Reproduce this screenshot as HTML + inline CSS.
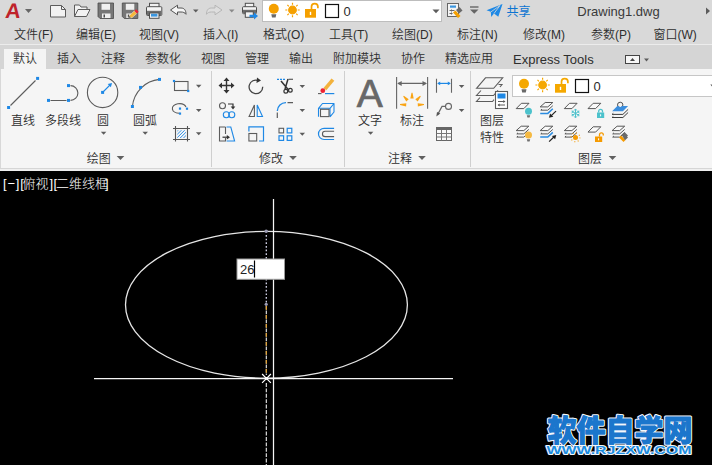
<!DOCTYPE html>
<html><head><meta charset="utf-8"><title>Drawing1.dwg</title>
<style>
*{margin:0;padding:0;box-sizing:border-box}
html,body{width:712px;height:465px;overflow:hidden;background:#000}
body{position:relative;font-family:"Liberation Sans","Noto Sans CJK SC",sans-serif;font-size:12px;color:#333}
.abs{position:absolute}
#title{left:0;top:0;width:712px;height:24px;background:#d9d9d9}
#menu{left:0;top:24px;width:712px;height:20px;background:#d9d9d9}
#tabs{left:0;top:44px;width:712px;height:25px;background:#d5d5d5;border-top:1px solid #ececec}
#panel{left:0;top:69px;width:712px;height:99px;background:#f5f5f5;border-left:1px solid #d8d8d8}
#strip{left:0;top:168px;width:712px;height:3px;background:#efefef;border-top:1.5px solid #d6d6d6}
#view{left:0;top:171px;width:712px;height:294px;background:#000}
.t{position:absolute;white-space:nowrap;line-height:14px;height:14px}
.m{top:28px;font-size:12px;color:#2e2e2e;font-weight:350}
.tb{top:52px;font-size:12px;color:#2e2e2e;font-weight:350}
.lb{font-size:12px;color:#2e2e2e;font-weight:350}
.vl{top:177px;font-size:13px;color:#fff;font-weight:300}
</style></head><body>
<div id="title" class="abs"></div>
<div id="menu" class="abs"></div>
<div id="tabs" class="abs"></div>
<div id="panel" class="abs"></div>
<div id="strip" class="abs"></div>
<div id="view" class="abs"></div>

<!-- menu -->
<span class="t m" style="left:14px">文件(F)</span>
<span class="t m" style="left:76px">编辑(E)</span>
<span class="t m" style="left:139px">视图(V)</span>
<span class="t m" style="left:203px">插入(I)</span>
<span class="t m" style="left:263px">格式(O)</span>
<span class="t m" style="left:329px">工具(T)</span>
<span class="t m" style="left:392px">绘图(D)</span>
<span class="t m" style="left:457px">标注(N)</span>
<span class="t m" style="left:523px">修改(M)</span>
<span class="t m" style="left:591px">参数(P)</span>
<span class="t m" style="left:653.500px">窗口(W)</span>

<!-- tabs -->
<div class="abs" style="left:4px;top:49px;width:42px;height:21px;background:#f4f4f4"></div>
<span class="t tb" style="left:13px">默认</span>
<span class="t tb" style="left:57px">插入</span>
<span class="t tb" style="left:101px">注释</span>
<span class="t tb" style="left:145px">参数化</span>
<span class="t tb" style="left:201px">视图</span>
<span class="t tb" style="left:245px">管理</span>
<span class="t tb" style="left:289px">输出</span>
<span class="t tb" style="left:333px">附加模块</span>
<span class="t tb" style="left:401px">协作</span>
<span class="t tb" style="left:445px">精选应用</span>
<span class="t tb" style="left:513px;top:53px;font-size:13px">Express Tools</span>

<!-- panel labels -->
<span class="t lb" style="left:11px;top:114px">直线</span>
<span class="t lb" style="left:45px;top:114px">多段线</span>
<span class="t lb" style="left:97px;top:114px">圆</span>
<span class="t lb" style="left:133px;top:114px">圆弧</span>
<span class="t lb" style="left:86.800px;top:152px">绘图</span>
<span class="t lb" style="left:259px;top:152px">修改</span>
<span class="t lb" style="left:358px;top:114px">文字</span>
<span class="t lb" style="left:400px;top:114px">标注</span>
<span class="t lb" style="left:388px;top:152px">注释</span>
<span class="t lb" style="left:480px;top:114px">图层</span>
<span class="t lb" style="left:480px;top:131px">特性</span>
<span class="t lb" style="left:578px;top:152px">图层</span>


<!-- ICONS-TOP -->
<svg class="abs" style="left:0;top:0" width="712" height="171" viewBox="0 0 712 171" fill="none" font-family="Liberation Sans, Noto Sans CJK SC, sans-serif">
<!-- logo -->
<text x="6.800" y="18.300" font-size="21.200" font-weight="bold" fill="#bf232b" transform="skewX(-6)">A</text>
<path d="M25 9h7l-3.500 4z" fill="#666"/>
<!-- new -->
<path d="M50.500 5.500h11l4 4v7.500h-15z" fill="#f2f2f2" stroke="#5c5c5c"/>
<path d="M61.500 5.500v4h4" stroke="#5c5c5c"/>
<!-- open -->
<path d="M74.500 16.500v-11.500h5l1.500 2h6v2.500" stroke="#5c5c5c" fill="#f2f2f2"/>
<path d="M74.500 16.500l3.500-7h12l-3.500 7z" fill="#f2f2f2" stroke="#5c5c5c"/>
<!-- save -->
<path d="M98 3h15.500v15.500h-13.500l-2-2z" fill="#777" stroke="#4a4a4a" stroke-width="0.800"/>
<rect x="101.500" y="3.800" width="8.500" height="6" fill="#f0f0f0"/>
<rect x="102" y="13.500" width="8.500" height="4.500" fill="#f0f0f0"/>
<rect x="103.500" y="14.500" width="1.500" height="3" fill="#4a4a4a"/>
<!-- save as -->
<path d="M122.300 3h15.500v15.500h-13.500l-2-2z" fill="#777" stroke="#4a4a4a" stroke-width="0.800"/>
<rect x="125.800" y="3.800" width="8.500" height="6" fill="#f0f0f0"/>
<rect x="126.300" y="13.500" width="5" height="4.500" fill="#f0f0f0"/>
<rect x="127.800" y="14.500" width="1.500" height="3" fill="#4a4a4a"/>
<path d="M128.800 17.800l0.800-2.600l4.800-4.400l2.400 2.600l-4.800 4.400z" fill="#f5b83c" stroke="#e6e6e6" stroke-width="0.500"/>
<path d="M134.400 10.800l1.800-1.600l2.400 2.600l-1.800 1.600z" fill="#ee2233"/>
<path d="M128.600 18l0.700-2.300l1.700 1.700z" fill="#666"/>
<!-- print -->
<rect x="149.500" y="3.300" width="9.500" height="5" fill="#f0f0f0" stroke="#4f4f4f"/>
<rect x="146.500" y="6.700" width="15.300" height="8.800" rx="1" fill="#f4f4f4" stroke="#4f4f4f"/>
<rect x="147" y="10.800" width="14.300" height="4.300" fill="#6e6e6e"/>
<rect x="149.500" y="13" width="9.500" height="5.300" fill="#f4f4f4" stroke="#4f4f4f"/>
<rect x="151" y="13.800" width="6.400" height="2.800" fill="#3a96e0"/>
<!-- undo -->
<path d="M170.500 10L177.500 5.200V8H181C184.500 8 186 10.500 186 14.300C184.800 12.600 183.300 12 181 12H177.500V14.800Z" fill="#f6f6f6" stroke="#555" stroke-linejoin="round"/>
<path d="M193 9.500h5.500l-2.750 3z" fill="#5c5c5c"/>
<!-- redo -->
<path d="M222 10L215 5.200V8H211.500C208 8 206.500 10.500 206.500 14.300C207.700 12.600 209.200 12 211.500 12H215V14.800Z" fill="#dedede" stroke="#b6b6b6" stroke-linejoin="round"/>
<path d="M229 9.500h5.500l-2.750 3z" fill="#8a8a8a"/>
<!-- plot -->
<rect x="245.300" y="3.300" width="8.400" height="4.500" fill="#f4f4f4" stroke="#4f4f4f"/>
<rect x="242.500" y="6.700" width="14" height="7" rx="1" fill="#f4f4f4" stroke="#4f4f4f"/>
<rect x="243" y="9.800" width="13" height="3.400" fill="#6e6e6e"/>
<rect x="245.300" y="11.800" width="8" height="5.500" fill="#f4f4f4" stroke="#4f4f4f"/>
<path d="M249.500 14.800h4.500v-2.200l4 3.400l-4 3.400v-2.200h-4.500z" fill="#1e88e5"/>
<!-- layer combo -->
<rect x="262.500" y="0.500" width="179" height="21" fill="#fff" stroke="#bdbdbd"/>
<circle cx="273.800" cy="8.800" r="5" fill="#f5a000"/>
<path d="M271.300 14.300h5l-0.700 3.200h-3.600z" fill="#6a6a6a"/>
<g stroke="#f5a000" stroke-width="1.200">
<circle cx="292.500" cy="10" r="3.800" fill="#f5a000"/>
<path d="M292.500 2.800v2M292.500 15.200v2M285.300 10h2M297.700 10h2M287.400 4.900l1.400 1.400M296.200 13.700l1.400 1.400M287.400 15.100l1.400-1.400M296.200 6.300l1.400-1.400"/>
</g>
<rect x="305" y="9" width="11" height="8.700" fill="#f5a000"/>
<rect x="309.800" y="11.800" width="1.400" height="3.200" fill="#fff"/>
<path d="M311.500 9v-2.200a3.200 3.200 0 0 1 6.400 0v1.400" stroke="#f5a000" stroke-width="1.700"/>
<rect x="325.500" y="4.500" width="13" height="13" fill="#fff" stroke="#111" stroke-width="1.200"/>
<text x="343.500" y="15.500" font-size="13" fill="#2b2b2b">0</text>
<path d="M432.500 9.500h7l-3.500 3.800z" fill="#5c5c5c"/>
<!-- match prop -->
<rect x="447.500" y="3.500" width="11" height="13" fill="#f4f4f4" stroke="#666"/>
<rect x="450" y="5.500" width="6" height="2.200" fill="#3a96e0"/>
<path d="M449.500 10.500h5M449.500 13.500h3" stroke="#666"/>
<path d="M451.500 9.500v2M451.500 12.500v2" stroke="#666"/>
<path d="M453 12.500l2.500-2l5 5.500l-2.500 2z" fill="#f5a000"/>
<path d="M456 10l3.500-3l3 3.500l-3.500 3z" fill="#6a6a6a"/>
<!-- customize -->
<rect x="470" y="6.300" width="8.500" height="1.400" fill="#666"/>
<path d="M470 9.500h8.500l-4.250 4.200z" fill="#666"/>
<!-- plane -->
<path d="M486.500 10.200l16-6.200l-4.200 12.800l-4.300-3.300l-2.800 3.500l-0.400-5.200z" fill="#1e88e5"/>
<path d="M491 11.800l9-6.300l-6 8" stroke="#d9d9d9" stroke-width="0.800"/>
<text x="506.500" y="15.500" font-size="12" fill="#0b74d1">共享</text>
<text x="577.300" y="15.500" font-size="13" fill="#3a3a3a">Drawing1.dwg</text>
<path d="M706 7.500l4 3.500l-4 3.500z" fill="#5c5c5c"/>
<!-- tab row extras -->
<rect x="625.500" y="55.500" width="14" height="8" fill="#f6f6f6" stroke="#444"/>
<path d="M630 61h5l-2.500-3z" fill="#444"/>
<path d="M644 58.500h5l-2.500 3z" fill="#5c5c5c"/>
<!-- RIBBON-ICONS -->
<path d="M211.5 71v96" stroke="#cfcfcf"/>
<path d="M344.5 71v96" stroke="#cfcfcf"/>
<path d="M470.5 71v96" stroke="#cfcfcf"/>
<path d="M10.500 105.500L35.500 80.500" stroke="#5c5c5c" stroke-width="1.100"/><rect x="36.10" y="76.90" width="3" height="3" fill="#1e88e5"/><rect x="7.10" y="106.00" width="3" height="3" fill="#1e88e5"/>
<path d="M50.500 100.500h16M70.500 85.600a7.400 7.400 0 0 1 0 14.800" stroke="#5c5c5c" stroke-width="1.100"/><rect x="47.00" y="98.90" width="3" height="3" fill="#1e88e5"/><rect x="67.00" y="98.90" width="3" height="3" fill="#1e88e5"/><rect x="67.00" y="84.10" width="3" height="3" fill="#1e88e5"/>
<circle cx="102.600" cy="92.400" r="15.200" stroke="#5c5c5c" stroke-width="1.100"/><rect x="101.10" y="90.90" width="3" height="3" fill="#1e88e5"/><path d="M103.500 91.500l6.500-6.500" stroke="#1e88e5" stroke-width="1.100"/><path d="M112 83l-1.100 4.300l-3.200-3.200z" fill="#1e88e5"/>
<path d="M100.85 131.70h5.5l-2.75 3z" fill="#5c5c5c"/><path d="M142.45 131.70h5.5l-2.75 3z" fill="#5c5c5c"/>
<path d="M132.400 106.500A30 30 0 0 1 159.500 79.400" stroke="#5c5c5c" stroke-width="1.100"/><rect x="158.00" y="77.90" width="3" height="3" fill="#1e88e5"/><rect x="139.00" y="85.90" width="3" height="3" fill="#1e88e5"/><rect x="130.90" y="105.00" width="3" height="3" fill="#1e88e5"/>
<rect x="174.500" y="81.500" width="13.500" height="9" stroke="#5c5c5c" stroke-width="1.100"/><rect x="172.90" y="79.90" width="2.2" height="2.2" fill="#1e88e5"/><rect x="187.10" y="89.90" width="2.2" height="2.2" fill="#1e88e5"/><path d="M195.95 84.70h5.5l-2.75 3z" fill="#5c5c5c"/>
<path d="M186 107a7 4.800 0 1 0 -6.500 6.300" stroke="#5c5c5c" stroke-width="1.100"/><rect x="178.90" y="107.50" width="2.2" height="2.2" fill="#1e88e5"/><rect x="185.90" y="107.60" width="2.2" height="2.2" fill="#1e88e5"/><rect x="178.90" y="112.50" width="2.2" height="2.2" fill="#1e88e5"/><path d="M195.95 109.00h5.5l-2.75 3z" fill="#5c5c5c"/>
<defs><clipPath id="hc"><rect x="177.300" y="130.300" width="8.600" height="7.600"/></clipPath></defs><g clip-path="url(#hc)" stroke="#2a8fe8" stroke-width="1"><path d="M164.5 140.500l13-13"/><path d="M167.8 140.500l13-13"/><path d="M171.1 140.500l13-13"/><path d="M174.4 140.500l13-13"/><path d="M177.7 140.500l13-13"/><path d="M181.0 140.500l13-13"/><path d="M184.3 140.500l13-13"/><path d="M187.6 140.500l13-13"/><path d="M190.9 140.500l13-13"/><path d="M194.2 140.500l13-13"/></g>
<path d="M175.500 126v15.500M187.500 126v15.500M173 128.500h17M173 139.500h17" stroke="#555" stroke-width="1.100"/><path d="M195.95 132.30h5.5l-2.75 3z" fill="#5c5c5c"/>
<path d="M226.500 79.500v12M220.500 85.500h12" stroke="#333" stroke-width="1.400"/><path d="M226.500 77.500l3 3.500h-6zM226.500 93.500l3-3.500h-6zM218.500 85.500l3.500-3v6zM234.500 85.500l-3.500-3v6z" fill="#333"/>
<path d="M258.500 80.600A6.800 6.800 0 1 0 262.700 86.800" stroke="#444" stroke-width="1.300"/><path d="M257 77.500l4 3l-4.500 2.500z" fill="#333"/>
<path d="M277 79.300h8.500" stroke="#1e88e5" stroke-width="1.300" stroke-dasharray="2 1"/><path d="M288.500 79.300h4.500" stroke="#5c5c5c" stroke-width="1.200"/><path d="M281 81l8 9.500M288 79l-3 10" stroke="#333" stroke-width="1.500"/><circle cx="285.800" cy="91.300" r="1.900" stroke="#333" stroke-width="1.200"/><circle cx="290.300" cy="90.300" r="1.900" stroke="#333" stroke-width="1.200"/><path d="M299.55 84.90h5.5l-2.75 3z" fill="#5c5c5c"/>
<circle cx="222.500" cy="105.700" r="3" stroke="#5c5c5c" stroke-width="1.100"/><path d="M228 104h5v3" stroke="#333" stroke-width="1.200"/><path d="M233 109.500l-2.300-3h4.600z" fill="#333"/><circle cx="226.300" cy="114.700" r="3" stroke="#1e88e5" stroke-width="1.100"/><circle cx="231.800" cy="114.700" r="3" stroke="#1e88e5" stroke-width="1.100"/>
<path d="M254.400 105v11.500h-5.300z" stroke="#5c5c5c" stroke-width="1.100"/><path d="M257.200 105v11.500h5.300z" stroke="#1e88e5" stroke-width="1.100"/>
<path d="M277.300 111A8.500 8.500 0 0 1 286 102.600" stroke="#1e88e5" stroke-width="1.300"/><path d="M287.500 102.600h5.500M277.300 112.500v5.500" stroke="#5c5c5c" stroke-width="1.200"/><path d="M299.55 109.10h5.5l-2.75 3z" fill="#5c5c5c"/>
<path d="M225.500 127h-6v14h6v-3M225.500 127v7" stroke="#5c5c5c" stroke-width="1.100"/><path d="M222.500 137.200h5" stroke="#333" stroke-width="1.200"/><path d="M230 137.200l-3.200-2.300v4.600z" fill="#333"/><path d="M226.500 127h4.300l3.800 14h-8" stroke="#1e88e5" stroke-width="1.100"/>
<path d="M248.900 131.500v-4.600h14.600v14.100h-4.500" stroke="#1e88e5" stroke-width="1.200"/><rect x="248.900" y="133.500" width="7.800" height="7.500" stroke="#5c5c5c" stroke-width="1.100"/>
<rect x="279" y="128.300" width="4.600" height="4.600" stroke="#5c5c5c" stroke-width="1.100"/><rect x="287.200" y="128.300" width="4.600" height="4.600" stroke="#1e88e5" stroke-width="1.200"/><rect x="279" y="135.800" width="4.600" height="4.600" stroke="#1e88e5" stroke-width="1.200"/><rect x="287.200" y="135.800" width="4.600" height="4.600" stroke="#1e88e5" stroke-width="1.200"/><path d="M299.55 132.80h5.5l-2.75 3z" fill="#5c5c5c"/>
<path d="M331.500 78.500l2.800 2.300l-8 9.500l-2.800-2.300z" fill="#f3b23c"/><circle cx="322.800" cy="90.700" r="2.400" fill="#ee2233"/><path d="M318 93.600h3.500" stroke="#5c5c5c" stroke-width="1.100"/><path d="M325 93.600h9.300" stroke="#1e88e5" stroke-width="1.200"/>
<path d="M318.500 116.800v-8.500l4-4.800h11.500v8.500l-4 4.800M318.500 108.300h11.500l4-4.800M330 108.300v8.500" stroke="#1e88e5" stroke-width="1.100" stroke-linejoin="round"/><rect x="320.500" y="109.300" width="8.500" height="7.300" stroke="#5c5c5c" stroke-width="1.100"/>
<path d="M334.100 128.300h-10a5.600 5.600 0 0 0 0 11.200h10" stroke="#1e88e5" stroke-width="1.200"/><path d="M334.100 131.300h-9a2.650 2.650 0 0 0 0 5.300h9" stroke="#5c5c5c" stroke-width="1.100"/>
<text x="356.800" y="107.200" font-size="39" fill="#686868" stroke="#686868" stroke-width="0.700">A</text><path d="M367.85 131.70h5.5l-2.75 3z" fill="#5c5c5c"/>
<path d="M396.600 77v31.700M427.600 77v31.700M398 83.400h28" stroke="#666" stroke-width="1.100"/><path d="M397.200 83.400l4.500-2.500v5zM427 83.400l-4.500-2.500v5z" fill="#666"/>
<path d="M411.5 92.8L412.5 92.8L413.7 98.6L410.3 98.6zM420.1 95.8L420.8 96.5L417.7 101.5L415.3 99.2zM403.2 96.5L403.9 95.8L408.7 99.2L406.3 101.5zM424.0 104.1L424.0 105.1L417.9 106.6L417.7 103.2zM400.0 105.1L400.0 104.1L406.3 103.2L406.1 106.6z" fill="#f9a414"/>
<path d="M436.500 78.800v14M451.500 78.800v14" stroke="#666" stroke-width="1.100"/><path d="M438 83.400h12" stroke="#1e88e5" stroke-width="1.200"/><path d="M437.200 83.400l3-1.800v3.600zM450.800 83.400l-3-1.800v3.600z" fill="#1e88e5"/><path d="M458.85 84.90h5.5l-2.75 3z" fill="#5c5c5c"/>
<circle cx="448.500" cy="106.400" r="3" stroke="#666" stroke-width="1.100"/><path d="M445.500 106.400h-3.500l-4.500 8.500" stroke="#666" stroke-width="1.200"/><path d="M436.300 116.500l0.700-4.600l3.300 1.700z" fill="#555"/><path d="M458.85 109.10h5.5l-2.75 3z" fill="#5c5c5c"/>
<rect x="436.500" y="127.500" width="15" height="13" fill="#fafafa" stroke="#666" stroke-width="1"/><rect x="436" y="127" width="16" height="3" fill="#666"/><path d="M436.500 133.500h15M436.500 137h15M441.500 130v10.500M446.500 130v10.500" stroke="#777" stroke-width="1"/>
<path d="M116.70 156h7.600l-3.800 4z" fill="#606060"/>
<path d="M289.20 156h7.600l-3.800 4z" fill="#606060"/>
<path d="M418.20 156h7.600l-3.800 4z" fill="#606060"/>
<path d="M608.70 156h7.600l-3.800 4z" fill="#606060"/>
<path d="M476.500 88.300l9-10.500h17.200l-9 10.500z" stroke="#5c5c5c" stroke-width="1.100" fill="#f4f4f4"/>
<path d="M481 90.500l-4.500 5h17l4.500-5.200M498.500 84.500h3.500l-2 2.500M480 97.500l-3.500 4h16l1.500-1.800" stroke="#5c5c5c" stroke-width="1.100"/>
<rect x="495.500" y="91.500" width="12" height="17" fill="#fff" stroke="#5c5c5c" stroke-width="1.100"/><rect x="497.500" y="93.500" width="8" height="5" fill="#1e88e5"/>
<path d="M498 101.500h7M498 105h7" stroke="#5c5c5c" stroke-width="1"/><path d="M505.500 101.500l-2.200-1.500v3zM497.500 105l2.200-1.500v3z" fill="#5c5c5c"/>
<rect x="512.500" y="75.500" width="205" height="21" fill="#fff" stroke="#c6c6c6"/>
<circle cx="524" cy="83.800" r="5" fill="#f5a800"/><path d="M521.500 89.300h5l-0.700 3.200h-3.600z" fill="#6a6a6a"/>
<g stroke="#f5a800" stroke-width="1.200"><circle cx="542.600" cy="85" r="3.800" fill="#f5a800"/><path d="M542.600 77.800v2M542.600 90.200v2M535.400 85h2M547.800 85h2M537.500 79.900l1.400 1.400M546.300 88.700l1.400 1.400M537.500 90.100l1.400-1.400M546.300 81.300l1.400-1.400"/></g>
<rect x="555" y="84" width="11" height="8.700" fill="#f5a800"/><rect x="559.800" y="86.800" width="1.400" height="3.200" fill="#fff"/><path d="M561.500 84v-2.200a3.200 3.200 0 0 1 6.400 0v1.400" stroke="#f5a800" stroke-width="1.700"/>
<rect x="575.500" y="79.500" width="13" height="13" fill="#fff" stroke="#111" stroke-width="1.200"/><text x="593.500" y="90.500" font-size="13" fill="#2b2b2b">0</text>
<path d="M710.300 84.500h5l-2.500 3z" fill="#5c5c5c"/>
<!-- SMALL-LAYER-START -->
<path d="M516.2 108.6l5.2 -5.3h7.6l-5.2 5.3z" stroke="#4f4f4f" stroke-width="0.95" fill="#f9f9f9"/><circle cx="528.5" cy="111.2" r="3.500" fill="#4cc2cc"/><path d="M526.8 115.3h3.400l-0.600 2.300h-2.200z" fill="#707070"/>
<path d="M540.2 106.9l5.0 -4.4h7.6l-5.0 4.4z" stroke="#4f4f4f" stroke-width="0.95" fill="#f9f9f9"/><path d="M542.0 109.1l-1.2 1.100h7l5-4.500" stroke="#4f4f4f" stroke-width="0.95"/><path d="M540.2 113.4h7.600l5-4.700" stroke="#2a8be0" stroke-width="1.500"/><path d="M556 111.100l-5 4.800" stroke="#222" stroke-width="1.200"/><path d="M548.900 117.800l1.200-4.300l3.200 3.300z" fill="#222"/>
<path d="M564.3 108.6l5.2 -5.3h7.6l-5.2 5.3z" stroke="#4f4f4f" stroke-width="0.95" fill="#f9f9f9"/>
<path d="M575.5 113.4l3.90 2.25M577.92 114.80l1.45 -0.68M577.92 114.80l0.14 1.59M575.5 113.4l0.00 4.50M575.50 116.20l1.31 0.92M575.50 116.20l-1.31 0.92M575.5 113.4l-3.90 2.25M573.08 114.80l-0.14 1.59M573.08 114.80l-1.45 -0.68M575.5 113.4l-3.90 -2.25M573.08 112.00l-1.45 0.68M573.08 112.00l-0.14 -1.59M575.5 113.4l-0.00 -4.50M575.50 110.60l-1.31 -0.92M575.50 110.60l1.31 -0.92M575.5 113.4l3.90 -2.25M577.92 112.00l0.14 -1.59M577.92 112.00l1.45 0.68" stroke="#4cc2cc" stroke-width="1"/>
<path d="M588.0 108.6l5.2 -5.3h7.6l-5.2 5.3z" stroke="#4f4f4f" stroke-width="0.95" fill="#f9f9f9"/><rect x="597" y="112.500" width="7.200" height="5.500" fill="#4cc2cc"/><path d="M598.700 112.500v-1.300a1.900 1.900 0 0 1 3.800 0v1.300" stroke="#4cc2cc" stroke-width="1.300"/><rect x="600.100" y="114.300" width="1" height="2" fill="#fff"/>
<circle cx="620.200" cy="104.900" r="2.700" stroke="#4f4f4f" stroke-width="1" fill="#f4f4f4"/>
<path d="M612.100 111.300l5.200-5.300h1a2.800 2.800 0 0 0 3.800 0h6l-5.200 5.300z" fill="#3b8ede"/>
<path d="M613.300 113.300l-1.200 1.100h10.800l5.200-5M613.300 116.400l-1.200 1.100h10.800l5.200-5" stroke="#333" stroke-width="0.95"/>
<path d="M516.2 130.6l5.0 -4.4h7.6l-5.0 4.4z" stroke="#4f4f4f" stroke-width="0.95" fill="#f9f9f9"/><path d="M518.0 132.8l-1.2 1.100h7l5-4.500" stroke="#4f4f4f" stroke-width="0.95"/><path d="M518.0 136.0l-1.200 1.100h7l5-4.500" stroke="#4f4f4f" stroke-width="0.95"/><circle cx="528.5" cy="135.1" r="3.500" fill="#f5b942"/><path d="M526.8 139.2h3.400l-0.600 2.300h-2.200z" fill="#707070"/>
<path d="M540.2 130.6l5.0 -4.4h7.6l-5.0 4.4z" stroke="#4f4f4f" stroke-width="0.95" fill="#f9f9f9"/><path d="M542.0 132.8l-1.2 1.100h7l5-4.500" stroke="#4f4f4f" stroke-width="0.95"/><path d="M540.2 137.1h7.600l5-4.700" stroke="#2a8be0" stroke-width="1.500"/><path d="M549.100 141.600l5-4.800" stroke="#222" stroke-width="1.200"/><path d="M556.300 135l-1.200 4.300l-3.200-3.300z" fill="#222"/>
<path d="M564.3 130.6l5.0 -4.4h7.6l-5.0 4.4z" stroke="#4f4f4f" stroke-width="0.95" fill="#f9f9f9"/><path d="M566.1 132.8l-1.2 1.100h7l5-4.500" stroke="#4f4f4f" stroke-width="0.95"/><path d="M566.1 136.0l-1.200 1.100h7l5-4.500" stroke="#4f4f4f" stroke-width="0.95"/><circle cx="575.500" cy="137.400" r="2.500" fill="#f59a00"/><circle cx="575.500" cy="137.400" r="4.400" stroke="#f59a00" stroke-width="1.100" stroke-dasharray="1 2.450"/>
<path d="M588.0 132.1l5.2 -5.3h7.6l-5.2 5.3z" stroke="#4f4f4f" stroke-width="0.95" fill="#f9f9f9"/><rect x="595" y="136.500" width="7.200" height="5.500" fill="#f59a00"/><path d="M599.500 136.500v-1.800a1.900 1.900 0 0 1 3.800 0v0.800" stroke="#f59a00" stroke-width="1.300"/><rect x="598.100" y="138.300" width="1" height="2" fill="#fff"/>
<path d="M612.1 130.6l5.0 -4.4h7.6l-5.0 4.4z" stroke="#4f4f4f" stroke-width="0.95" fill="#f9f9f9"/><path d="M613.9 132.8l-1.2 1.100h7l5-4.500" stroke="#4f4f4f" stroke-width="0.95"/><path d="M613.9 136.0l-1.200 1.100h7l5-4.500" stroke="#4f4f4f" stroke-width="0.95"/><path d="M619 137.500l2-2l4.500 4.500l-2 2z" fill="#f59a00"/><path d="M621.500 134.800l3-2.800l3.500 3.500l-1 1l1 1l-3 2.800z" fill="#6a6a6a"/>
<!-- SMALL-LAYER-END -->
</svg>

<!-- viewport -->
<span class="t vl" style="left:3px;letter-spacing:0.8px">[−][</span><span class="t vl" style="left:22.500px">俯视</span><span class="t vl" style="left:49.500px;letter-spacing:0.5px">][</span><span class="t vl" style="left:56px">二维线框</span><span class="t vl" style="left:105px">]</span>
<svg class="abs" style="left:0;top:171px" width="712" height="294" viewBox="0 171 712 294">
  <ellipse cx="266.450" cy="304.800" rx="140.950" ry="73.400" fill="none" stroke="#e6e6e6" stroke-width="1.300"/>
  <line x1="94" y1="378.500" x2="453" y2="378.500" stroke="#f6f6f6" stroke-width="1.250"/>
  <line x1="273.500" y1="199" x2="273.500" y2="465" stroke="#f6f6f6" stroke-width="1.250"/>
  <line x1="266.300" y1="235" x2="266.300" y2="303" stroke="#d4d4ea" stroke-width="1.300" stroke-dasharray="1.700 1.950"/>
  <circle cx="266.200" cy="231.200" r="1.800" fill="#9c9cb4"/>
  <circle cx="266.200" cy="304.300" r="1.600" fill="#9c9cb4"/>
  <line x1="266.300" y1="306" x2="266.300" y2="375" stroke="#f0f0f0" stroke-width="1.100" stroke-dasharray="3.700 0.800"/>
  <line x1="266.300" y1="306" x2="266.300" y2="375" stroke="#e39a1c" stroke-width="1.100" stroke-dasharray="3.700 5.300"/>
  <line x1="266.300" y1="383" x2="266.300" y2="465" stroke="#f0f0f0" stroke-width="1.100" stroke-dasharray="3.900 1.500"/>
  <path d="M262.100 374l8.800 8.800M270.900 374l-8.800 8.800" stroke="#fff" stroke-width="1.200"/><circle cx="266.500" cy="378.400" r="1.300" fill="#fff"/>
  <rect x="237" y="259" width="47.500" height="20.300" fill="#fff" stroke="#9a9a9a" stroke-width="1"/>
  <text x="240" y="273.500" font-size="13" fill="#222" font-family="Liberation Sans, sans-serif">26</text>
  <line x1="254.500" y1="260.500" x2="254.500" y2="277.500" stroke="#000" stroke-width="1.200"/>
  <g font-family="Liberation Sans, Noto Sans CJK SC, sans-serif" font-weight="900" stroke="#f2f7fc" stroke-linejoin="round" paint-order="stroke">
  <text x="547.500" y="441.300" font-size="29.500" stroke-width="3" fill="#1b76cc" textLength="145" lengthAdjust="spacingAndGlyphs">软件自学网</text>
  <text x="547.500" y="441.300" font-size="29.500" stroke="#1b76cc" stroke-width="0.800" fill="#1b76cc" textLength="145" lengthAdjust="spacingAndGlyphs">软件自学网</text>
  <text x="546.500" y="454.200" font-size="10.600" stroke-width="1.800" font-weight="bold" fill="#1b8ce0" textLength="145" lengthAdjust="spacingAndGlyphs">WWW.RJZXW.COM</text>
  </g>
</svg>
</body></html>
